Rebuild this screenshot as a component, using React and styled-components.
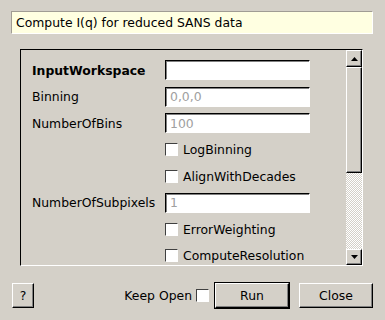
import React from "react";
import styled, { createGlobalStyle } from "styled-components";

const Global = createGlobalStyle`
  html, body { margin: 0; padding: 0; background: #d4d0c8; }
  body { font-family: "DejaVu Sans", Verdana, sans-serif; font-size: 12.4px; color: #000; }
  * { box-sizing: border-box; }
`;

const Dialog = styled.div`
  width: 385px;
  height: 320px;
  background: #d4d0c8;
  display: flex;
  flex-direction: column;
  padding: 11px 12px 0 11px;
`;

const Description = styled.div`
  height: 23px;
  background: #ffffe1;
  border-top: 1px solid #a09c94;
  border-left: 1px solid #a09c94;
  border-right: 1px solid #ffffff;
  border-bottom: 1px solid #ffffff;
  display: flex;
  align-items: center;
  padding-left: 4px;
`;

const ScrollPanel = styled.div`
  margin: 15px 10px 0 9px;
  height: 217px;
  display: flex;
  border-top: 1px solid #000;
  border-left: 1px solid #000;
  border-right: 1px solid #fff;
  border-bottom: 1px solid #fff;
`;

const Form = styled.div`
  flex: 1;
  display: grid;
  grid-template-columns: 126px 145px;
  column-gap: 7px;
  grid-auto-rows: 20px;
  row-gap: 6.5px;
  padding: 10px 0 0 11px;
  overflow: hidden;
  align-items: center;
`;

const Label = styled.div`
  font-weight: ${(p) => (p.$bold ? "bold" : "normal")};
  white-space: nowrap;
`;

const TextBox = styled.div`
  grid-column: 2;
  height: 20px;
  background: #fff;
  border-top: 1px solid #000;
  border-left: 1px solid #000;
  border-right: 1px solid #fff;
  border-bottom: 1px solid #fff;
  box-shadow: inset 1px 1px 0 #808080;
  display: flex;
  align-items: center;
  padding-left: 4px;
  color: #a0a0a0;
`;

const CheckRow = styled.label`
  grid-column: 2;
  display: flex;
  align-items: center;
  gap: 5px;
  white-space: nowrap;
`;

const Box = styled.span`
  display: inline-block;
  width: 13px;
  height: 13px;
  background: #fff;
  border-top: 1px solid #404040;
  border-left: 1px solid #404040;
  border-right: 1px solid #fff;
  border-bottom: 1px solid #fff;
  flex: none;
`;

const ScrollBar = styled.div`
  width: 16px;
  display: flex;
  flex-direction: column;
`;

const RaisedBtn = styled.div`
  height: ${(p) => p.$h}px;
  flex: none;
  background: #d4d0c8;
  border-top: 1px solid #fff;
  border-left: 1px solid #fff;
  border-right: 1px solid #000;
  border-bottom: 1px solid #000;
  box-shadow: inset -1px -1px 0 #808080;
  display: flex;
  align-items: center;
  justify-content: center;
`;

const Track = styled.div`
  flex: 1;
  background: repeating-conic-gradient(#ffffff 0 25%, #d4d0c8 0 50%) 0 0 / 2px 2px;
`;

const Footer = styled.div`
  margin-top: 17px;
  display: flex;
  align-items: center;
  padding-left: 1px;
`;

const Button = styled.button`
  font-family: inherit;
  font-size: 12.4px;
  color: #000;
  width: ${(p) => p.$w}px;
  height: 25px;
  padding: 0;
  background: #d4d0c8;
  border-top: 1px solid #fff;
  border-left: 1px solid #fff;
  border-right: 1px solid #000;
  border-bottom: 1px solid #000;
  box-shadow: inset -1px -1px 0 #808080${(p) => (p.$default ? ", 0 0 0 1px #000" : "")};
  margin-left: ${(p) => p.$ml || 0}px;
`;

const KeepOpen = styled.label`
  margin-left: auto;
  display: flex;
  align-items: center;
  gap: 4px;
  margin-right: 6px;
`;

const Arrow = ({ down }) => (
  <svg width="7" height="4" viewBox="0 0 7 4">
    <polygon points={down ? "0,0 7,0 3.5,4" : "0,4 7,4 3.5,0"} fill="#000" />
  </svg>
);

const rows = [
  { type: "text", label: "InputWorkspace", bold: true, value: "" },
  { type: "text", label: "Binning", value: "0,0,0" },
  { type: "text", label: "NumberOfBins", value: "100" },
  { type: "check", label: "LogBinning" },
  { type: "check", label: "AlignWithDecades" },
  { type: "text", label: "NumberOfSubpixels", value: "1" },
  { type: "check", label: "ErrorWeighting" },
  { type: "check", label: "ComputeResolution" },
];

export default function App() {
  return (
    <>
      <Global />
      <Dialog>
        <Description>Compute I(q) for reduced SANS data</Description>
        <ScrollPanel>
          <Form>
            {rows.map((r) =>
              r.type === "text" ? (
                <React.Fragment key={r.label}>
                  <Label $bold={r.bold}>{r.label}</Label>
                  <TextBox>{r.value}</TextBox>
                </React.Fragment>
              ) : (
                <CheckRow key={r.label}>
                  <Box />
                  {r.label}
                </CheckRow>
              )
            )}
          </Form>
          <ScrollBar>
            <RaisedBtn $h={17}><Arrow /></RaisedBtn>
            <RaisedBtn $h={106} />
            <Track />
            <RaisedBtn $h={16}><Arrow down /></RaisedBtn>
          </ScrollBar>
        </ScrollPanel>
        <Footer>
          <Button $w={22}>?</Button>
          <KeepOpen>
            Keep Open <Box />
          </KeepOpen>
          <Button $w={74} $default>Run</Button>
          <Button $w={74} $ml={10}>Close</Button>
        </Footer>
      </Dialog>
    </>
  );
}
